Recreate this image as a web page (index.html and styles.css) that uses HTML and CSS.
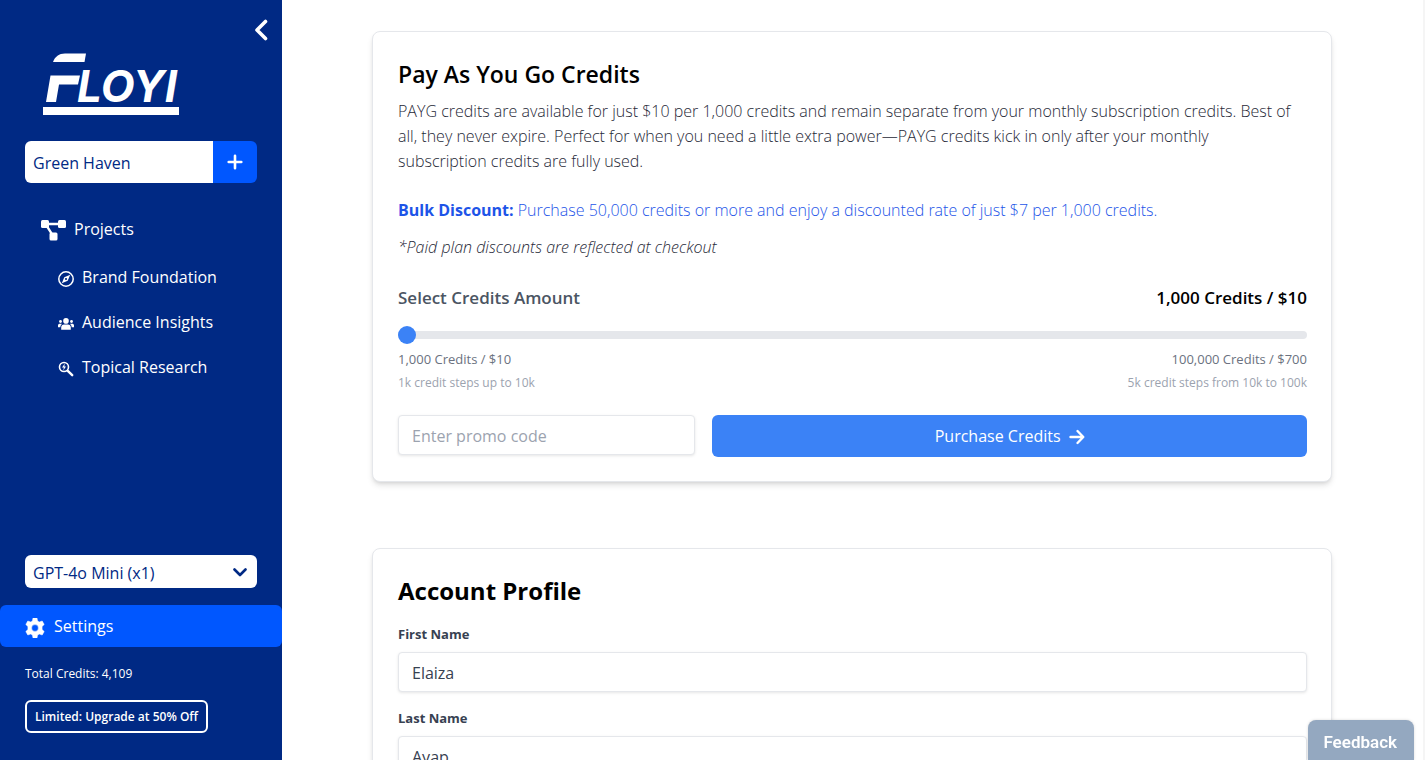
FILE: index.html
```html
<!DOCTYPE html>
<html lang="en">
<head>
<meta charset="utf-8">
<title>Floyi – Settings</title>
<link rel="stylesheet" href="styles.css">
</head>
<body>
<div class="app">
  <aside class="sidebar">
    <button class="collapse" aria-label="Collapse sidebar">
      <svg width="14" height="22" viewBox="0 0 14 22"><path d="M11.500 2.500 3 11l8.500 8.500" fill="none" stroke="currentColor" stroke-width="3.600" stroke-linecap="round" stroke-linejoin="round"/></svg>
    </button>
    <svg class="logo" width="138" height="64" viewBox="0 0 138 64" role="img" aria-label="Floyi">
      <g fill="#fff">
        <path d="M10 10C12 4.500 16 1.500 22 1.500H43L41.500 10Z"/>
        <path d="M7.500 23.500H37L35 32.500H16L13 50H3Z"/>
        <rect x="0" y="55" width="136" height="8"/>
        <text class="logo-text" x="34" y="50">LOYI</text>
      </g>
    </svg>
    <div class="brand">
      <input class="brand-name" type="text" value="Green Haven" aria-label="Brand">
      <button class="brand-add" aria-label="Add brand">
        <svg width="16" height="16" viewBox="0 0 16 16"><path d="M8 1.700v12.600M1.700 8h12.600" stroke="currentColor" stroke-width="2.600" stroke-linecap="round"/></svg>
      </button>
    </div>
    <nav class="nav">
      <a class="nav-link" href="#">
        <svg width="25" height="21" viewBox="0 0 25 21" fill="currentColor"><rect x="0" y="0" width="8" height="8" rx="1.500"/><rect x="17" y="0" width="8" height="8" rx="1.500"/><rect x="8.500" y="12.500" width="8" height="8" rx="1.500"/><path d="M7 2.800h11v2.400H7zM5 7l2-1.200 4.500 7-2 1.200z"/></svg>
        Projects
      </a>
      <a class="nav-link sub" href="#">
        <svg width="16" height="16" viewBox="0 0 16 16"><circle cx="8" cy="8" r="7.200" fill="none" stroke="currentColor" stroke-width="1.500"/><path d="M12.200 3.800 9.700 9.700 3.800 12.200 6.300 6.300Z" fill="currentColor"/><circle cx="8" cy="8" r="1.100" fill="#002984"/></svg>
        Brand Foundation
      </a>
      <a class="nav-link sub" href="#">
        <svg width="16" height="12" viewBox="0 0 16 12" fill="currentColor"><circle cx="8" cy="2.900" r="2.800"/><circle cx="2.500" cy="3.500" r="1.400"/><circle cx="13.500" cy="3.500" r="1.400"/><path d="M3.200 11.800V9.600C3.200 7.800 4.400 6.600 6 6.600h4c1.600 0 2.800 1.200 2.800 3v2.200zM0 9.200V7.300C0 6.300.8 5.700 1.700 5.700H3.600L3.900 6.100C2.800 7 2.400 8 2.300 9.200zM16 9.200V7.300C16 6.300 15.200 5.700 14.300 5.700H12.400L12.100 6.100C13.200 7 13.600 8 13.700 9.200z"/></svg>
        Audience Insights
      </a>
      <a class="nav-link sub" href="#">
        <svg width="16" height="16" viewBox="0 0 16 16" fill="none" stroke="currentColor"><circle cx="6" cy="6" r="4.500" stroke-width="1.600"/><path d="M9.800 9.800 14.200 14.200" stroke-width="2.400" stroke-linecap="round"/><path d="M6.800 2.600 4 6.500H5.800L5.300 9.400 8 5.500H6.300Z" fill="currentColor" stroke="none"/></svg>
        Topical Research
      </a>
    </nav>
    <div class="model">
      <select class="model-select" aria-label="Model"><option>GPT-4o Mini (x1)</option></select>
      <svg class="model-arrow" width="14" height="9" viewBox="0 0 14 9"><path d="M1.500 1.500 7 7l5.500-5.500" fill="none" stroke="currentColor" stroke-width="2.600" stroke-linecap="round" stroke-linejoin="round"/></svg>
    </div>
    <a class="settings" href="#">
      <svg width="20" height="20" viewBox="0 0 20 20"><path fill="currentColor" fill-rule="evenodd" d="M8 0h4l.6 2.900 1.800 1L17.200 3l2 3.500L17.100 8.500v3L19.200 13.500l-2 3.500-2.800-.9-1.800 1L12 20H8l-.6-2.900-1.800-1L2.800 17l-2-3.500L2.900 11.500v-3L.8 6.500 2.800 3l2.800.9 1.800-1ZM10 6.600a3.400 3.400 0 1 0 0 6.800 3.400 3.400 0 1 0 0-6.800Z" stroke="currentColor" stroke-width=".5" stroke-linejoin="round"/></svg>
      Settings
    </a>
    <p class="total">Total Credits: 4,109</p>
    <a class="upgrade" href="#">Limited: Upgrade at 50% Off</a>
  </aside>

  <main class="main">
    <section class="card">
      <h2 class="title medium">Pay As You Go Credits</h2>
      <p class="text">PAYG credits are available for just $10 per 1,000 credits and remain separate from your monthly subscription credits. Best of all, they never expire. Perfect for when you need a little extra power—PAYG credits kick in only after your monthly subscription credits are fully used.</p>
      <p class="text bulk"><strong>Bulk Discount:</strong> Purchase 50,000 credits or more and enjoy a discounted rate of just $7 per 1,000 credits.</p>
      <p class="text note">*Paid plan discounts are reflected at checkout</p>
      <div class="row amount">
        <label for="credits">Select Credits Amount</label>
        <output for="credits">1,000 Credits / $10</output>
      </div>
      <input class="slider" id="credits" type="range" min="0" max="100" value="0">
      <div class="row range"><span>1,000 Credits / $10</span><span>100,000 Credits / $700</span></div>
      <div class="row steps"><span>1k credit steps up to 10k</span><span>5k credit steps from 10k to 100k</span></div>
      <div class="purchase">
        <input class="field" type="text" placeholder="Enter promo code" aria-label="Promo code">
        <button class="buy">Purchase Credits
          <svg width="16" height="16" viewBox="0 0 16 16"><path d="M1.500 8H14M8.500 2 14.300 8 8.500 14" fill="none" stroke="currentColor" stroke-width="2.400" stroke-linecap="round" stroke-linejoin="round"/></svg>
        </button>
      </div>
    </section>

    <section class="card">
      <h2 class="title">Account Profile</h2>
      <div class="group">
        <label for="first">First Name</label>
        <input class="field" id="first" type="text" value="Elaiza">
      </div>
      <div class="group">
        <label for="last">Last Name</label>
        <input class="field" id="last" type="text" value="Ayap">
      </div>
    </section>
  </main>
</div>
<button class="feedback">Feedback</button>
</body>
</html>
```
FILE: styles.css
```css
* { box-sizing: border-box; }

body {
  margin: 0;
  font: 16px/25px "Open Sans", "Noto Sans", sans-serif;
  color: #000;
  background: #fff;
}

h2, p { margin: 0; }
a { color: inherit; text-decoration: none; }
button, input, select { font: inherit; color: inherit; border: 0; padding: 0; margin: 0; }
svg { display: block; flex: none; }

.app { display: flex; height: 100vh; overflow: hidden; }

.sidebar {
  flex: none;
  display: flex;
  flex-direction: column;
  width: 282px;
  padding: 19px 0 27px;
  background: #002984;
  color: #fff;
}
.collapse { align-self: flex-end; margin-right: 14px; background: none; color: #fff; }
.logo { margin: 11px 0 0 43px; }
.logo-text { font: italic 700 44px Inter, sans-serif; }

.brand { display: flex; height: 42px; margin: 25px 25px 0; border-radius: 6px; overflow: hidden; }
.brand-name { flex: 1; min-width: 0; padding: 2px 8px 0; background: #fff; color: #002984; }
.brand-add { display: grid; place-items: center; width: 44px; background: #0057ff; color: #fff; }

.nav { display: flex; flex-direction: column; gap: 20px; margin-top: 34px; }
.nav-link { display: flex; align-items: center; gap: 8px; padding-left: 41px; }
.nav-link svg { margin-top: 2px; }
.nav-link.sub { padding-left: 58px; }
.nav-link:first-child { margin-bottom: 3px; }

.model { position: relative; margin: auto 25px 0; }
.model-select { display: block; appearance: none; width: 100%; height: 33px; padding: 3px 8px 0; border-radius: 6px; background: #fff; color: #002984; }
.model-arrow { position: absolute; right: 10px; top: 13px; color: #002984; pointer-events: none; }

.settings { display: flex; align-items: center; gap: 9px; height: 42px; margin-top: 17px; padding-left: 25px; border-radius: 6px; background: #0057ff; }
.settings svg { margin-top: 4px; }
.total { margin: 17px 25px 0; font-size: 12px; line-height: 20px; font-weight: 500; }
.upgrade { align-self: flex-start; margin: 16px 25px 0; padding: 5px 8px 4px; border: 2px solid #fff; border-radius: 6px; font-size: 12px; line-height: 20px; font-weight: 600; }

.main { flex: 1; min-width: 0; display: flex; flex-direction: column; align-items: center; gap: 66px; padding: 31px 17px 0 16px; border-right: 2px solid #f5f5f5; overflow: hidden; }

.card { flex: none; width: 100%; max-width: 960px; padding: 25px 24px 24px 25px; border: 1px solid #e5e7eb; border-radius: 8px; background: #fff; box-shadow: 0 4px 6px -1px rgb(0 0 0 / 12%), 0 2px 4px -2px rgb(0 0 0 / 12%); }
.title { font-size: 24px; line-height: 34px; font-weight: 700; }
.title.medium { font-size: 23px; font-weight: 600; }
.text { padding-right: 12px; color: #1f2937; font-weight: 300; }
.title + .text { margin-top: 8px; }
.text.bulk { margin-top: 24px; color: #1d54e8; }
.bulk strong { font-weight: 700; }
.note { margin-top: 12px; font-style: italic; }

.row { display: flex; justify-content: space-between; }
.amount { margin-top: 25px; font-size: 17px; font-weight: 600; }
.amount label { color: #4b5563; }
.slider { display: block; appearance: none; width: 100%; height: 8px; margin: 21px 0 15px; border-radius: 4px; background: #e5e7eb; }
.slider::-webkit-slider-thumb { appearance: none; width: 18px; height: 18px; border-radius: 50%; background: #3b82f6; }
.range, .steps { font-size: 12px; line-height: 20px; }
.range { margin-top: -5px; color: #6b7280; font-size: 13px; }
.steps { margin-top: 4px; color: #9ca3af; }

.purchase { display: grid; grid-template-columns: 1fr 2fr; gap: 17px; margin-top: 22px; align-items: start; }
.field { width: 100%; height: 40px; padding: 1px 13px 0; border: 1px solid #e5e7eb; border-radius: 4px; background: #fff; color: #374151; box-shadow: 0 1px 3px rgb(0 0 0 / 10%); }
.field::placeholder { color: #9ca3af; opacity: 1; }
.buy { display: flex; align-items: center; justify-content: center; gap: 8px; height: 42px; padding-top: 1px; border-radius: 6px; background: #3b82f6; color: #fff; }

.group { margin-top: 16px; }
.group label { display: block; margin-bottom: 8px; font-size: 13px; line-height: 20px; font-weight: 700; color: #374151; }

.feedback { position: fixed; right: 11px; bottom: 0; height: 40px; padding: 3px 17px 0 15px; border-radius: 8px 8px 0 0; background: #94a8c0; color: #fff; font: 600 17px/24px Roboto, sans-serif; box-shadow: 0 0 3px rgb(0 0 0 / 15%); }
```
